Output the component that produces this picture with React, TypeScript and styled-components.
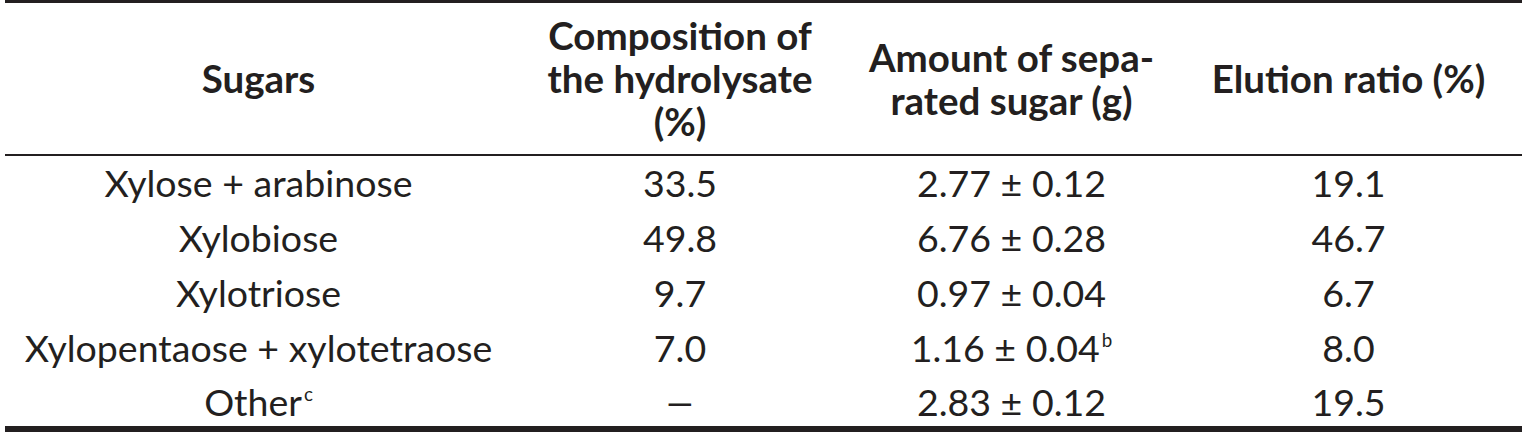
import React from "react";
import styled, { createGlobalStyle } from "styled-components";

const GlobalStyle = createGlobalStyle`
  html, body {
    margin: 0;
    padding: 0;
    background: #ffffff;
  }
  body {
    padding-left: 5px;
    font-family: Lato, "Liberation Sans", sans-serif;
    color: #231f20;
  }
`;

const Table = styled.table`
  width: 1517px;
  border-collapse: separate;
  border-spacing: 0;
  table-layout: fixed;
  border-top: 3px solid #231f20;
  border-bottom: 6px solid #231f20;
`;

const HeadRow = styled.tr`
  height: 153px;
`;

const HeadCell = styled.th`
  padding: 0;
  font-weight: 700;
  font-size: 38.5px;
  line-height: 43px;
  text-align: center;
  vertical-align: middle;
  border-bottom: 2px solid #231f20;
`;

const Cell = styled.td`
  padding: 2px 0 0;
  font-weight: 400;
  font-size: 37.5px;
  line-height: 50px;
  text-align: center;
  vertical-align: top;
  white-space: nowrap;
`;

const BodyRow = styled.tr`
  height: 55px;

  &:last-child {
    height: 50px;
  }

  &:last-child ${Cell} {
    padding-top: 3px;
    line-height: 46px;
  }
`;

const Sup = styled.sup`
  font-size: 0.5em;
  line-height: 0;
  vertical-align: 0;
  position: relative;
  top: -0.8em;
  margin-left: 2px;
`;

const Dash = styled.span`
  display: inline-block;
  transform: scaleX(1.5);
`;

type Row = { sugar: React.ReactNode; comp: React.ReactNode; amount: React.ReactNode; ratio: string };

const rows: Row[] = [
  { sugar: "Xylose + arabinose", comp: "33.5", amount: "2.77 ± 0.12", ratio: "19.1" },
  { sugar: "Xylobiose", comp: "49.8", amount: "6.76 ± 0.28", ratio: "46.7" },
  { sugar: "Xylotriose", comp: "9.7", amount: "0.97 ± 0.04", ratio: "6.7" },
  {
    sugar: "Xylopentaose + xylotetraose",
    comp: "7.0",
    amount: (
      <>
        1.16 ± 0.04<Sup>b</Sup>
      </>
    ),
    ratio: "8.0",
  },
  {
    sugar: (
      <>
        Other<Sup>c</Sup>
      </>
    ),
    comp: <Dash>–</Dash>,
    amount: "2.83 ± 0.12",
    ratio: "19.5",
  },
];

export default function App() {
  return (
    <>
      <GlobalStyle />
      <Table>
        <colgroup>
          <col style={{ width: 507 }} />
          <col style={{ width: 336 }} />
          <col style={{ width: 327 }} />
          <col style={{ width: 347 }} />
        </colgroup>
        <thead>
          <HeadRow>
            <HeadCell>Sugars</HeadCell>
            <HeadCell>
              Composition of
              <br />
              the hydrolysate
              <br />
              (%)
            </HeadCell>
            <HeadCell>
              Amount of sepa-
              <br />
              rated sugar (g)
            </HeadCell>
            <HeadCell>Elution ratio (%)</HeadCell>
          </HeadRow>
        </thead>
        <tbody>
          {rows.map((r, i) => (
            <BodyRow key={i}>
              <Cell>{r.sugar}</Cell>
              <Cell>{r.comp}</Cell>
              <Cell>{r.amount}</Cell>
              <Cell>{r.ratio}</Cell>
            </BodyRow>
          ))}
        </tbody>
      </Table>
    </>
  );
}
